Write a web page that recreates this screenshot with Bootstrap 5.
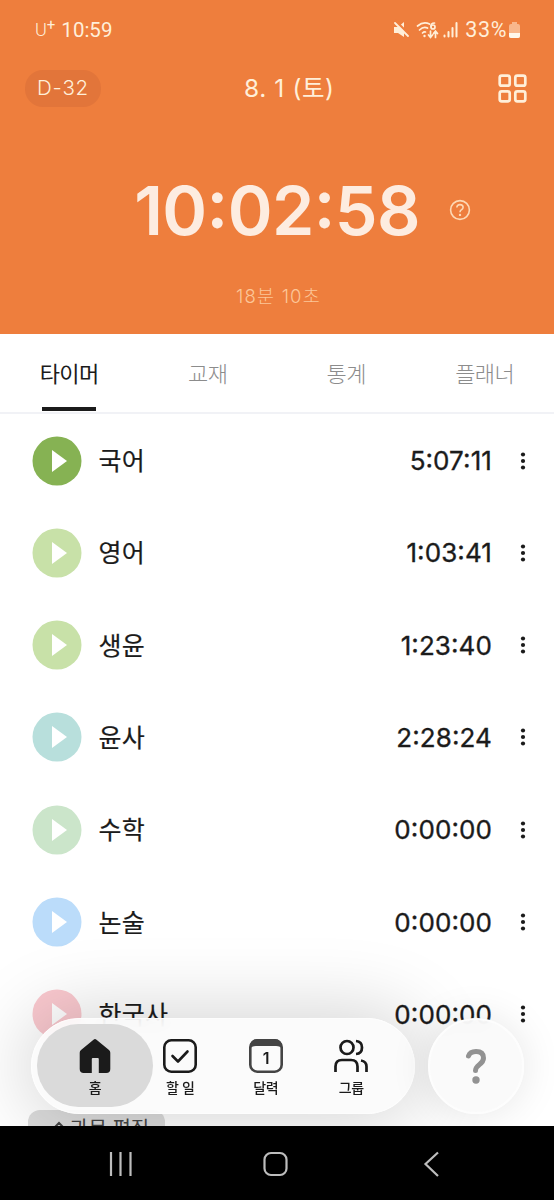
<!DOCTYPE html>
<html lang="ko">
<head>
<meta charset="utf-8">
<meta name="viewport" content="width=device-width, initial-scale=1">
<title>타이머</title>
<link href="https://cdn.jsdelivr.net/npm/bootstrap@5.3.0/dist/css/bootstrap.min.css" rel="stylesheet">
<style>
body{font-family:Inter,"Noto Sans CJK KR",sans-serif;background:#fff;color:#1b1b1b;line-height:1}
.phone{width:554px;height:1200px}
.hero{height:334px;background:#ee7e3d;color:#ffefd9}
.status{height:60px;padding:0 34px 0 35px;font-family:Roboto,sans-serif;font-size:20.5px}
.carrier{font-size:18px;font-weight:300}
.carrier sup{font-size:15px;top:-.4em;font-weight:400}
.clock-small{margin-left:6px}
.pct{letter-spacing:.6px;font-size:21.5px;margin-left:-1px}
.topbar{height:56px;padding:0 27px 0 25px}
.dday{width:76px;height:37px;border-radius:18px;background:#e2753a;font-size:20.5px;font-weight:300;letter-spacing:.8px}
.today{font-size:24.5px;letter-spacing:.6px;font-weight:400;margin-left:143px;padding-top:1px}
.clock{height:171px;padding-top:60px}
.clock-total{font-size:68px;font-weight:600;color:#fdece0;letter-spacing:-.6px;font-feature-settings:"case"}
.session{color:#fcc698;font-size:18.5px;font-weight:300;letter-spacing:1.2px;padding-left:3px}
.tabs{height:80px;border-bottom:2px solid #f1f2f6}
.tab-item{width:25%;font-size:22px;font-weight:300;color:#8c8c8c;letter-spacing:-.5px;text-decoration:none;padding-top:2px}
.tab-item.on{color:#1b1b1b;font-weight:400}
.tab-item.on::after{content:"";position:absolute;left:42px;bottom:1px;width:54px;height:4px;background:#1b1b1b}
.subjects{padding-top:.4px}
.subject{height:92.3px;flex:none;padding:0 26px 0 32px}
.play{width:50px;height:50px}
.subject-name{font-size:25px;letter-spacing:.3px;margin-left:16.5px;font-weight:400;padding-top:2px;-webkit-text-stroke:.2px}
.subject-time{font-size:26px;font-weight:400;-webkit-text-stroke:.35px;letter-spacing:.1px;margin-right:26px;padding-top:1px;font-feature-settings:"case"}
.edit{left:28px;top:776px;width:137px;height:50px;border-radius:12px;background:#dcdcdc;color:#444;font-size:20px;padding:9px 0 0 24px;gap:4px}
.dock{left:31px;top:684px;width:384px;height:96px;border-radius:48px;padding:5px 6px 6px 5px;background:rgba(250,250,250,.88);backdrop-filter:blur(9px);border:1px solid #fdfdfd;box-shadow:0 0 75px 8px rgba(0,0,0,.17)}
.dock-item{width:85.5px;height:83px;font-size:14px;font-weight:500;color:#1b1b1b;padding-top:12px;gap:7px;letter-spacing:-.3px}
.dock-item.on{width:116px;border-radius:42px;background:#dadada;margin-right:-15.5px}
.help{left:428px;top:684px;width:96px;height:96px;background:rgba(250,250,250,.92);backdrop-filter:blur(9px);border:2px solid #fdfdfd;box-shadow:0 0 40px rgba(0,0,0,.1)}
.sysnav{height:74px;background:#000}
svg{display:block;flex:none}
</style>
<script src="https://cdn.jsdelivr.net/npm/bootstrap@5.3.0/dist/js/bootstrap.bundle.min.js"></script>
</head>
<body>
<div class="phone d-flex flex-column overflow-hidden">
<header class="hero flex-shrink-0">
  <div class="status d-flex align-items-center justify-content-between">
    <div class="d-flex align-items-center"><span class="carrier">U<sup>+</sup></span><span class="clock-small">10:59</span></div>
    <div class="d-flex align-items-center">
      <svg width="72" height="24" viewBox="0 0 72 24" fill="none" stroke="#ffefd9" stroke-width="1.700" stroke-linecap="round">
        <path d="M0 9h4l6-5v15l-6-4H0z" fill="#ffefd9" stroke="none"/><path d="M1.500 3l14 14" stroke="#ee7e3d" stroke-width="2.500"/><path d="M1 5l13 13" stroke-width="1.800"/>
        <path d="M23.500 8q6-5 12-2M25.500 12q4-4 8-2M28.500 15q1.500-1.500 3-1"/><circle cx="30.500" cy="18" r="1.200" fill="#ffefd9" stroke="none"/>
        <path d="M40.500 5q-4 0-3.500 4"/><circle cx="39" cy="9" r="2"/>
        <path d="M36.500 13v6m-2-2 2 2.500 2-2.500M41.500 19.500v-6m-2 2 2-2.500 2 2.500"/>
        <path d="M50.500 17.500v1M54.500 14v4.500M58.500 10v8.500M62.500 5v13.500" stroke-width="2"/>
      </svg>
      <span class="pct">33%</span>
      <svg style="margin-left:2px" width="11" height="18" viewBox="0 0 11 18"><path d="M3 1h5v2h1q2 0 2 2v10q0 2-2 2H2q-2 0-2-2V5q0-2 2-2h1z" fill="#f8b78c"/><path d="M0 12h11v3q0 2-2 2H2q-2 0-2-2z" fill="#fff8ec"/></svg>
    </div>
  </div>
  <div class="topbar d-flex align-items-center">
    <span class="dday d-flex align-items-center justify-content-center">D-32</span>
    <div class="today text-nowrap">8. 1 (토)</div>
    <svg class="ms-auto" width="29" height="29" viewBox="0 0 29 29" fill="none" stroke="#ffefd9" stroke-width="2.700"><rect x="1.700" y="1.700" width="10" height="10" rx="2"/><rect x="17.300" y="1.700" width="10" height="10" rx="2"/><rect x="1.700" y="17.300" width="10" height="10" rx="2"/><rect x="17.300" y="17.300" width="10" height="10" rx="2"/></svg>
  </div>
  <div class="clock position-relative d-flex justify-content-center">
    <div class="clock-total">10:02:58</div>
    <svg class="position-absolute" style="left:449px;top:83px" width="22" height="22" viewBox="0 0 22 22" fill="none" stroke="#fdd9b5" stroke-width="1.600"><circle cx="11" cy="11" r="9.400"/><path d="M7.800 8.500q.3-2.900 3.200-2.900 3.100 0 3.100 2.700 0 1.500-1.600 2.400Q11 11.700 11 13.200"/><circle cx="11" cy="15.900" r="1.200" fill="#fdd9b5" stroke="none"/></svg>
  </div>
  <div class="session text-center">18분 10초</div>
</header>
<main class="flex-grow-1 position-relative overflow-hidden">
  <nav class="tabs d-flex position-relative">
    <a class="tab-item on d-flex align-items-center justify-content-center">타이머</a>
    <a class="tab-item d-flex align-items-center justify-content-center">교재</a>
    <a class="tab-item d-flex align-items-center justify-content-center">통계</a>
    <a class="tab-item d-flex align-items-center justify-content-center">플래너</a>
  </nav>
  <div id="subjects" class="subjects d-flex flex-column"></div>
  <div class="edit position-absolute d-flex"><svg width="14" height="16" viewBox="0 0 14 16" fill="none" stroke="#444" stroke-width="2"><path d="M1 14V10l6-6 4 4-6 6z"/></svg><span>과목 편집</span></div>
  <nav class="dock position-absolute d-flex">
    <div class="dock-item on d-flex flex-column align-items-center">
      <svg width="36" height="38" viewBox="0 0 36 38"><path d="M16.500 3.700q1.500-1.200 3 0L32 14q1.300 1 1.300 2.700V33q0 4-4 4h-7.500V23q0-1-1-1h-5q-1 0-1 1v14H6.700q-4 0-4-4V16.700Q2.700 15 4 14z" fill="#1b1b1b"/></svg><span>홈</span></div>
    <div class="dock-item d-flex flex-column align-items-center">
      <svg width="36" height="38" viewBox="0 0 36 38" fill="none" stroke="#1b1b1b" stroke-width="2.600" stroke-linecap="round" stroke-linejoin="round"><rect x="2.300" y="4.300" width="31.400" height="31.400" rx="7"/><path d="m10.500 20 5.500 5.500 9.500-10"/></svg><span>할 일</span></div>
    <div class="dock-item d-flex flex-column align-items-center">
      <svg width="36" height="38" viewBox="0 0 36 38"><rect x="2.300" y="4.300" width="31.400" height="31.400" rx="7" fill="none" stroke="#444" stroke-width="2.600"/><path d="M2 13V11q0-8 8-8h16q8 0 8 8v2q-1.500-3-6-3H8q-4.500 0-6 3z" fill="#444"/><text x="18" y="27.500" text-anchor="middle" font-family="Inter" font-size="16" font-weight="600" fill="#1b1b1b">1</text></svg><span>달력</span></div>
    <div class="dock-item d-flex flex-column align-items-center">
      <svg width="36" height="38" viewBox="0 0 36 38" fill="none" stroke="#1b1b1b" stroke-width="2.700"><circle cx="14" cy="11.500" r="6.500"/><path d="M2.500 36v-5.500q0-6.500 6.500-6.500h9q6.500 0 6.500 6.500V36M23 5q6 .5 6 6.500T23 18M28 24.500q5.500 1 5.500 6V36"/></svg><span>그룹</span></div>
  </nav>
  <div class="help position-absolute rounded-circle d-flex align-items-center justify-content-center">
    <svg width="24" height="38" viewBox="0 0 24 38" fill="none" stroke="#929292" stroke-width="5" stroke-linecap="round"><path d="M4.500 9Q6 4.500 12 4.500q7.500 0 7.500 6.500 0 3.500-4 6.500t-4 6"/><circle cx="12" cy="33" r="3.700" fill="#929292" stroke="none"/></svg>
  </div>
</main>
<footer class="sysnav flex-shrink-0">
  <svg width="554" height="74" viewBox="0 0 554 74" fill="none" stroke="#bdbdbd" stroke-width="2.200"><path d="M111 26v24M120.500 26v24M130.500 26v24"/><rect x="264.500" y="27" width="22" height="22" rx="6.500"/><path d="m438 26.500-12.500 11.500L438 50"/></svg>
</footer>
</div>
<script>
const subjects=[["국어","5:07:11","#86b253"],["영어","1:03:41","#c8e1a8"],["생윤","1:23:40","#c8e1a8"],["윤사","2:28:24","#b8dfdc"],["수학","0:00:00","#cbe5ca"],["논술","0:00:00","#bbdcfa"],["한국사","0:00:00","#fac9cf"]];
document.getElementById("subjects").innerHTML=subjects.map(([n,t,c])=>`<div class="subject d-flex align-items-center">
<svg class="play" viewBox="0 0 50 50"><circle cx="25" cy="25" r="24.500" fill="${c}"/><path d="M20 14v22l15-11z" fill="#fff"/></svg>
<span class="subject-name">${n}</span><span class="subject-time ms-auto">${t}</span>
<svg width="10" height="20" viewBox="0 0 10 20" fill="#1b1b1b"><circle cx="5" cy="3.500" r="2.100"/><circle cx="5" cy="10" r="2.100"/><circle cx="5" cy="16.500" r="2.100"/></svg></div>`).join("");
</script>
</body>
</html>
